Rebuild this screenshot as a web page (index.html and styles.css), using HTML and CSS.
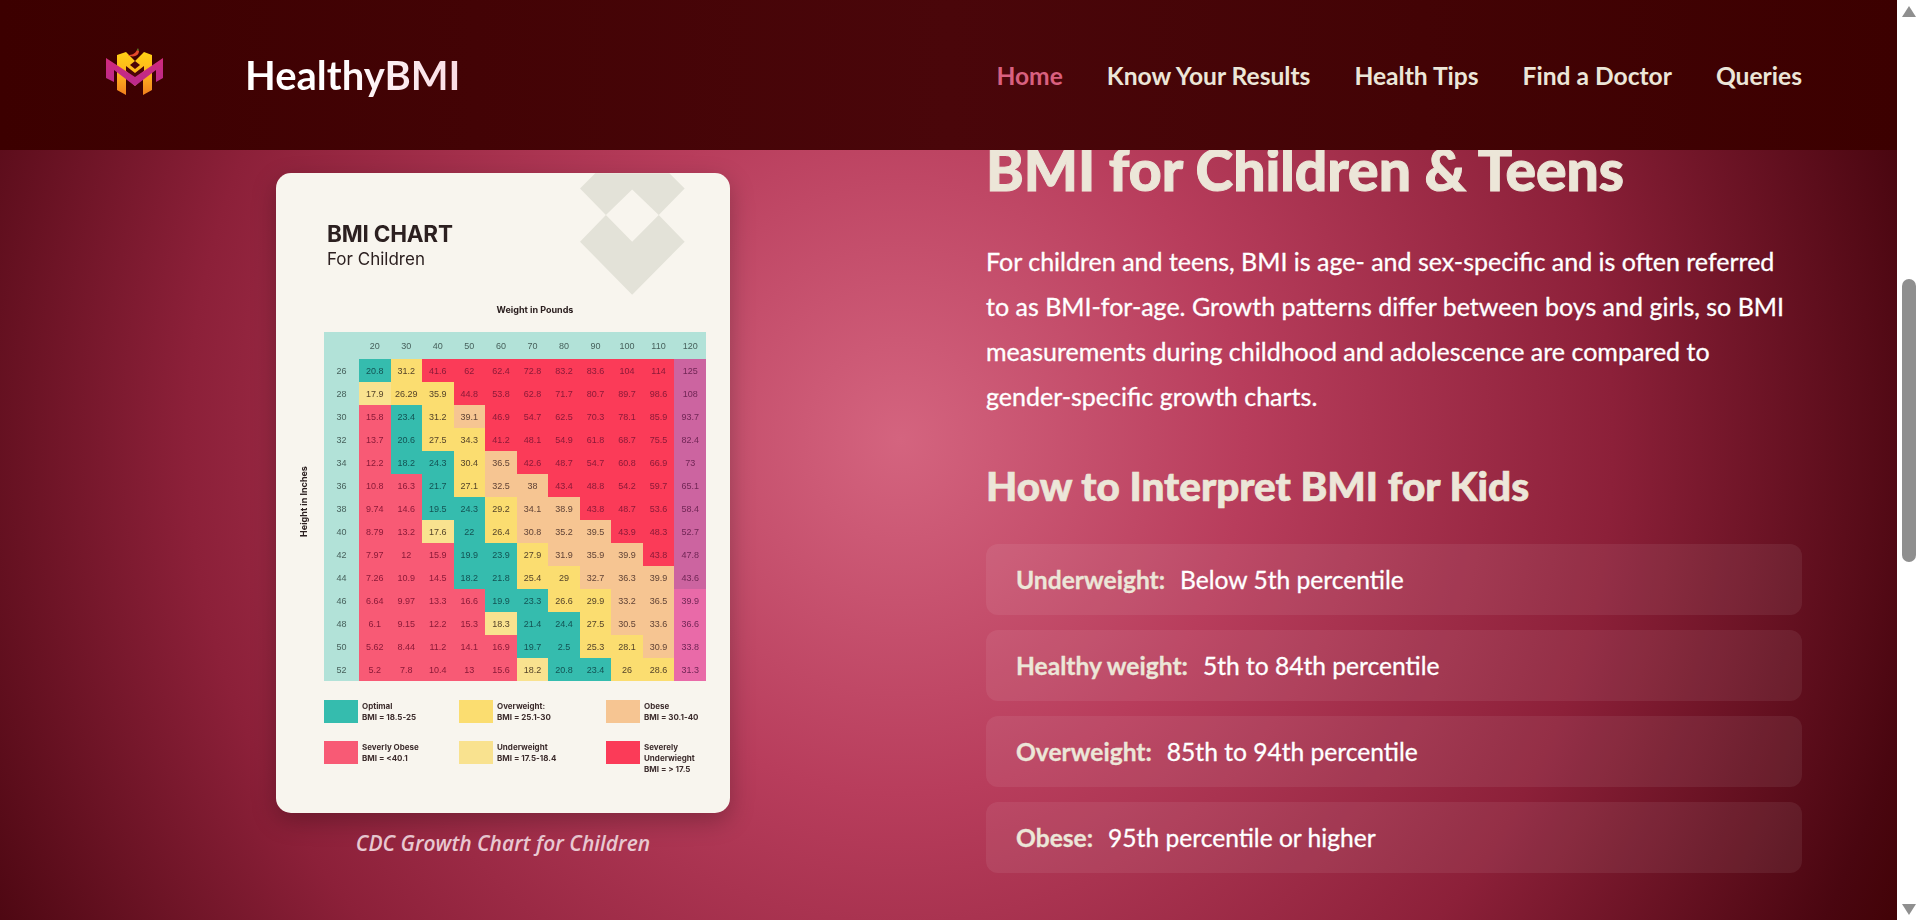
FILE: index.html
```html
<!DOCTYPE html>
<html lang="en">

<head>
    <meta charset="UTF-8">
    <title>BMI for Children - HealthyBMI</title>
    <link rel="stylesheet" href="styles.css">
</head>

<body>

    <div class="window">
        <div class="page">

            <header>
                <div class="brand">
                    <svg class="logo" viewBox="0 0 57 48" aria-label="HealthyBMI logo">
                        <defs>
                            <linearGradient id="gold" x1="0" y1="0" x2="0" y2="1">
                                <stop offset="0" stop-color="#ffd214"/>
                                <stop offset="0.55" stop-color="#fdb01e"/>
                                <stop offset="1" stop-color="#f07f1e"/>
                            </linearGradient>
                            <linearGradient id="pink" x1="0" y1="0" x2="0" y2="1">
                                <stop offset="0" stop-color="#d12a7c"/>
                                <stop offset="1" stop-color="#b92a8c"/>
                            </linearGradient>
                        </defs>
                        <path d="M11 7 L20 4 L29 13 L38 4 L46 7 L46 42 L37 47 L37 30 L29 38 L20 30 L20 47 L11 42 Z" fill="url(#gold)"/>
                        <path d="M20 18 L29 25 L38 18 L38 23 L29 31 L20 23 Z" fill="#4a0408"/>
                        <path d="M24 17 L29 21 L34 17 L29 13 Z" fill="#4a0408"/>
                        <path d="M0 10 L29 29 L57 10 L57 30 L50 34 L50 22 L29 38 L8 22 L8 34 L0 30 Z" fill="url(#pink)"/>
                        <path d="M22 7 C26 7 29 6 31 2 L33 3 C33 8 27 10 22 7 Z" fill="#e5482a"/>
                        <path d="M31 2 L32 0 L33 3 Z" fill="#5f8f2a"/>
                    </svg>
                    <div class="site-name">HealthyBMI</div>
                </div>
                <nav>
                    <a class="active" href="#">Home</a>
                    <a href="#">Know Your Results</a>
                    <a href="#">Health Tips</a>
                    <a href="#">Find a Doctor</a>
                    <a href="#">Queries</a>
                </nav>
            </header>

            <main>
                <!-- Chart column -->
                <section class="chart-col">
                    <div class="chart-card">
                        <svg class="diamonds" viewBox="120 39 316 366">
                            <path d="M120 85 L198 165 L277 88 L357 165 L435 85 L389 39 L166 39 Z" fill="#e3e2d8"/>
                            <path d="M277 245 L198 165 L120 245 L277 405 L435 245 L357 165 Z" fill="#e3e2d8"/>
                        </svg>
                        <div class="chart-inner">
                            <div class="chart-title">BMI CHART</div>
                            <div class="chart-sub">For Children</div>
                            <div class="axis-x">Weight in Pounds</div>
                            <div class="chart-body">
                                <div class="axis-y">Height in Inches</div>
                                <table class="bmi-table">
                                    <tr class="head"><td></td><td>20</td><td>30</td><td>40</td><td>50</td><td>60</td><td>70</td><td>80</td><td>90</td><td>100</td><td>110</td><td>120</td></tr>
                                    <tr><th>26</th><td class="t">20.8</td><td class="y">31.2</td><td class="r">41.6</td><td class="r">62</td><td class="r">62.4</td><td class="r">72.8</td><td class="r">83.2</td><td class="r">83.6</td><td class="r">104</td><td class="r">114</td><td class="m">125</td></tr>
                                    <tr><th>28</th><td class="l">17.9</td><td class="y">26.29</td><td class="y">35.9</td><td class="r">44.8</td><td class="r">53.8</td><td class="r">62.8</td><td class="r">71.7</td><td class="r">80.7</td><td class="r">89.7</td><td class="r">98.6</td><td class="m">108</td></tr>
                                    <tr><th>30</th><td class="p">15.8</td><td class="t">23.4</td><td class="y">31.2</td><td class="o">39.1</td><td class="r">46.9</td><td class="r">54.7</td><td class="r">62.5</td><td class="r">70.3</td><td class="r">78.1</td><td class="r">85.9</td><td class="m">93.7</td></tr>
                                    <tr><th>32</th><td class="p">13.7</td><td class="t">20.6</td><td class="y">27.5</td><td class="y">34.3</td><td class="r">41.2</td><td class="r">48.1</td><td class="r">54.9</td><td class="r">61.8</td><td class="r">68.7</td><td class="r">75.5</td><td class="m">82.4</td></tr>
                                    <tr><th>34</th><td class="p">12.2</td><td class="t">18.2</td><td class="t">24.3</td><td class="y">30.4</td><td class="o">36.5</td><td class="r">42.6</td><td class="r">48.7</td><td class="r">54.7</td><td class="r">60.8</td><td class="r">66.9</td><td class="m">73</td></tr>
                                    <tr><th>36</th><td class="p">10.8</td><td class="p">16.3</td><td class="t">21.7</td><td class="y">27.1</td><td class="o">32.5</td><td class="o">38</td><td class="r">43.4</td><td class="r">48.8</td><td class="r">54.2</td><td class="r">59.7</td><td class="m">65.1</td></tr>
                                    <tr><th>38</th><td class="p">9.74</td><td class="p">14.6</td><td class="t">19.5</td><td class="t">24.3</td><td class="y">29.2</td><td class="o">34.1</td><td class="o">38.9</td><td class="r">43.8</td><td class="r">48.7</td><td class="r">53.6</td><td class="m">58.4</td></tr>
                                    <tr><th>40</th><td class="p">8.79</td><td class="p">13.2</td><td class="l">17.6</td><td class="t">22</td><td class="y">26.4</td><td class="o">30.8</td><td class="o">35.2</td><td class="o">39.5</td><td class="r">43.9</td><td class="r">48.3</td><td class="m">52.7</td></tr>
                                    <tr><th>42</th><td class="p">7.97</td><td class="p">12</td><td class="p">15.9</td><td class="t">19.9</td><td class="t">23.9</td><td class="y">27.9</td><td class="o">31.9</td><td class="o">35.9</td><td class="o">39.9</td><td class="r">43.8</td><td class="m">47.8</td></tr>
                                    <tr><th>44</th><td class="p">7.26</td><td class="p">10.9</td><td class="p">14.5</td><td class="t">18.2</td><td class="t">21.8</td><td class="y">25.4</td><td class="y">29</td><td class="o">32.7</td><td class="o">36.3</td><td class="o">39.9</td><td class="m">43.6</td></tr>
                                    <tr><th>46</th><td class="p">6.64</td><td class="p">9.97</td><td class="p">13.3</td><td class="p">16.6</td><td class="t">19.9</td><td class="t">23.3</td><td class="y">26.6</td><td class="y">29.9</td><td class="o">33.2</td><td class="o">36.5</td><td class="h">39.9</td></tr>
                                    <tr><th>48</th><td class="p">6.1</td><td class="p">9.15</td><td class="p">12.2</td><td class="p">15.3</td><td class="l">18.3</td><td class="t">21.4</td><td class="t">24.4</td><td class="y">27.5</td><td class="o">30.5</td><td class="o">33.6</td><td class="h">36.6</td></tr>
                                    <tr><th>50</th><td class="p">5.62</td><td class="p">8.44</td><td class="p">11.2</td><td class="p">14.1</td><td class="p">16.9</td><td class="t">19.7</td><td class="t">2.5</td><td class="y">25.3</td><td class="y">28.1</td><td class="o">30.9</td><td class="h">33.8</td></tr>
                                    <tr><th>52</th><td class="p">5.2</td><td class="p">7.8</td><td class="p">10.4</td><td class="p">13</td><td class="p">15.6</td><td class="l">18.2</td><td class="t">20.8</td><td class="t">23.4</td><td class="y">26</td><td class="y">28.6</td><td class="h">31.3</td></tr>
                                </table>
                            </div>
                            <div class="legend">
                                <div class="legend-item"><span class="swatch t"></span><div>Optimal<br>BMI = 18.5-25</div></div>
                                <div class="legend-item"><span class="swatch y"></span><div>Overweight:<br>BMI = 25.1-30</div></div>
                                <div class="legend-item"><span class="swatch o"></span><div>Obese<br>BMI = 30.1-40</div></div>
                                <div class="legend-item"><span class="swatch p"></span><div>Severly Obese<br>BMI = &lt;40.1</div></div>
                                <div class="legend-item"><span class="swatch l"></span><div>Underweight<br>BMI = 17.5-18.4</div></div>
                                <div class="legend-item"><span class="swatch r"></span><div>Severely<br>Underwieght<br>BMI = &gt; 17.5</div></div>
                            </div>
                        </div>
                    </div>
                    <div class="caption">CDC Growth Chart for Children</div>
                </section>

                <!-- Text column -->
                <section class="text-col">
                    <h1>BMI for Children &amp; Teens</h1>
                    <p class="intro">For children and teens, BMI is age- and sex-specific and is often referred to as BMI-for-age. Growth patterns differ between boys and girls, so BMI measurements during childhood and adolescence are compared to <span class="nowrap">gender-specific</span> growth charts.</p>
                    <h2>How to Interpret BMI for Kids</h2>
                    <ul class="percentiles">
                        <li><strong>Underweight:</strong> Below 5th percentile</li>
                        <li><strong>Healthy weight:</strong> 5th to 84th percentile</li>
                        <li><strong>Overweight:</strong> 85th to 94th percentile</li>
                        <li><strong>Obese:</strong> 95th percentile or higher</li>
                    </ul>
                </section>
            </main>

        </div>

        <!-- Browser scrollbar from the screenshot -->
        <div class="scrollbar">
            <div class="arrow arrow-up"></div>
            <div class="track"><div class="thumb"></div></div>
            <div class="arrow arrow-down"></div>
        </div>
    </div>

</body>

</html>
```

FILE: styles.css
```css
/* General Reset */
* {
    margin: 0;
    padding: 0;
    box-sizing: border-box;
}

html, body {
    height: 100%;
    overflow: hidden;
}

body {
    font-family: Lato, sans-serif;
    color: #fff;
}

.window {
    display: flex;
    height: 920px;
}

.page {
    flex: 1;
    display: flex;
    flex-direction: column;
    min-width: 0;
    background: radial-gradient(ellipse 1150px 1180px at 900px 440px, #d4647f 0%, #b83d5c 30%, #8c2039 62%, #4a0610 90%, #3c0000 100%);
}

/* Header */
header {
    flex: none;
    height: 150px;
    display: flex;
    align-items: center;
    justify-content: space-between;
    padding: 0 95px 0 106px;
    background: linear-gradient(90deg, #3c0000, #4a060a 50%, #3c0000);
    position: relative;
    z-index: 2;
}

.brand {
    display: flex;
    align-items: center;
    gap: 82px;
}

.logo {
    width: 57px;
    height: 48px;
    margin-bottom: 6px;
}

.site-name {
    font-size: 40px;
    font-weight: 700;
    background: linear-gradient(90deg, #fff 40%, #fadbe3);
    -webkit-background-clip: text;
    background-clip: text;
    color: transparent;
}

nav {
    display: flex;
    gap: 44px;
}

nav a {
    font-size: 24.6px;
    font-weight: 700;
    color: #ece6d8;
    text-decoration: none;
    white-space: nowrap;
}

nav a.active {
    color: #d9607f;
}

/* Main layout */
main {
    flex: 1;
    min-height: 0;
    overflow: hidden;
    display: grid;
    grid-template-columns: 806px 816px;
    gap: 80px;
    padding-left: 100px;
}

.chart-col {
    display: flex;
    flex-direction: column;
    align-items: center;
    padding-top: 23px;
}

.chart-card {
    width: 454px;
    height: 640px;
    background-color: #f8f5ee;
    border-radius: 15px;
    box-shadow: 0 8px 24px rgba(0, 0, 0, 0.25);
    position: relative;
    overflow: hidden;
    color: #2c2020;
    font-family: Inter, sans-serif;
}

.diamonds {
    position: absolute;
    top: 0;
    left: 304px;
    width: 105px;
    height: 122px;
}

.chart-inner {
    position: relative;
    padding: 48px 24px 0 48px;
    filter: blur(0.45px);
}

.chart-title {
    font-size: 22.5px;
    font-weight: 700;
    line-height: 26px;
    padding-left: 3px;
    letter-spacing: -0.2px;
}

.chart-sub {
    font-size: 17px;
    line-height: 25px;
    padding-left: 3px;
}

.axis-x {
    font-size: 9px;
    font-weight: 700;
    text-align: center;
    margin: 32px 0 17px 0;
    padding-left: 40px;
}

.chart-body {
    position: relative;
}

.axis-y {
    position: absolute;
    left: -56px;
    top: 164px;
    font-size: 9px;
    font-weight: 700;
    transform: rotate(-90deg);
    white-space: nowrap;
}

.bmi-table {
    width: 382px;
    border-collapse: collapse;
    table-layout: fixed;
    font-family: "Liberation Sans", sans-serif;
    font-size: 9px;
    background-color: #b2e2d8;
    color: #47615c;
}

.bmi-table th,
.bmi-table td {
    height: 23px;
    text-align: center;
    font-weight: 400;
}

.bmi-table td:first-child,
.bmi-table th {
    width: 35px;
}

.bmi-table .head td {
    height: 27px;
}

/* Chart colours, also used by the legend */
.t { background-color: #35bcae; color: #135253; }
.y { background-color: #fbdd70; color: #54432a; }
.l { background-color: #f9e28f; color: #54432a; }
.o { background-color: #f6c592; color: #604336; }
.p { background-color: #f85a75; color: #8a1a38; }
.r { background-color: #fb3b58; color: #8a1a38; }
.m { background-color: #cc64a0; color: #702655; }
.h { background-color: #e96aa8; color: #702655; }

.legend {
    display: grid;
    grid-template-columns: 135px 147px 100px;
    row-gap: 18px;
    margin-top: 19px;
    font-size: 8px;
    font-weight: 700;
    line-height: 11px;
    color: #3c2c2c;
}

.legend-item {
    display: flex;
    gap: 4px;
    min-height: 23px;
}

.legend-item div {
    padding-top: 1px;
}

.swatch {
    width: 34px;
    height: 23px;
    flex: none;
}

.caption {
    margin-top: 16px;
    font-family: "Open Sans", sans-serif;
    font-size: 21px;
    font-weight: 600;
    font-style: italic;
    color: #eac9d2;
}

/* Text column */
h1 {
    font-size: 57px;
    font-weight: 900;
    line-height: 70px;
    color: #ece6d8;
    margin-top: -16px;
    -webkit-text-stroke: 1px #ece6d8;
}

.intro {
    font-size: 25px;
    line-height: 45px;
    margin-top: 35px;
    -webkit-text-stroke: 0.3px #fff;
}

.nowrap {
    white-space: nowrap;
}

h2 {
    font-size: 40.5px;
    font-weight: 900;
    line-height: 50px;
    color: #ece6d8;
    margin-top: 42px;
    -webkit-text-stroke: 0.7px #ece6d8;
}

.percentiles {
    list-style: none;
    display: flex;
    flex-direction: column;
    gap: 15px;
    margin-top: 33px;
}

.percentiles li {
    height: 71px;
    display: flex;
    align-items: center;
    gap: 15px;
    padding-left: 30px;
    font-size: 24.6px;
    -webkit-text-stroke: 0.3px #fff;
    background-color: rgba(255, 255, 255, 0.07);
    border-radius: 12px;
}

.percentiles strong {
    color: #ece6d8;
    -webkit-text-stroke: 0.3px #ece6d8;
}

/* Scrollbar */
.scrollbar {
    flex: none;
    width: 23px;
    display: flex;
    flex-direction: column;
    align-items: center;
    background-color: #fff;
}

.track {
    flex: 1;
    width: 100%;
    padding-top: 256px;
}

.thumb {
    width: 14px;
    height: 283px;
    margin: 0 auto;
    background-color: #8f8f8f;
    border-radius: 7px;
}

.arrow {
    flex: none;
    width: 0;
    height: 0;
    margin: 6px 0;
    border-left: 7px solid transparent;
    border-right: 7px solid transparent;
}

.arrow-up {
    border-bottom: 11px solid #8f8f8f;
}

.arrow-down {
    margin-bottom: 5px;
    border-top: 11px solid #8f8f8f;
}
```
